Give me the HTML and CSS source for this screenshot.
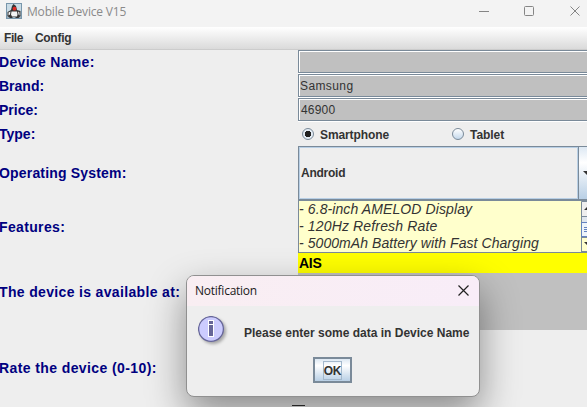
FILE: index.html
```html
<!DOCTYPE html>
<html lang="en">
<head>
<meta charset="utf-8">
<title>Mobile Device V15</title>
<link rel="stylesheet" href="styles.css">
</head>
<body>
<header class="titlebar">
  <svg class="app-icon" width="16" height="16" viewBox="0 0 16 16">
    <rect x=".5" y=".5" width="15" height="15" fill="#c9dbe5" stroke="#7896ab"/>
    <path d="M1 12h14v3H1z" fill="#9eb1bd"/>
    <path d="M7.500 1l2.500 2 1 4 3.500 1v5l-2 2h-2.500l-1-1h-2l-1 1H4l-2.500-2V9L5 7l1-4z" fill="#353535"/>
    <path d="M5.500 8.500h5.500l.5 3-.5 2H6l-1-2zM2.500 9.500l2-1-.5 3-1.500 1zM12 8.500l1.500 1v3l-1-1z" fill="#f4f4f4"/>
    <circle cx="8.500" cy="5.700" r="1.900" fill="#e02a24"/>
  </svg>
  <span class="window-title">Mobile Device V15</span>
  <svg class="window-buttons" width="102" height="22" viewBox="0 0 102 22" fill="none" stroke="#858585">
    <path d="M0 11.500h10"/>
    <rect x="45.500" y="6.500" width="9" height="9" rx="1"/>
    <path d="M91.500 6.500l9 9M100.500 6.500l-9 9"/>
  </svg>
</header>
<nav class="menubar"><span class="m-file">File</span><span class="m-config">Config</span></nav>
<main class="form">
  <label class="l-name">Device Name:</label><div class="field"></div>
  <label class="l-brand">Brand:</label><div class="field brand">Samsung</div>
  <label class="l-price">Price:</label><div class="field price">46900</div>
  <label class="l-type">Type:</label>
  <div class="radios">
    <span class="option"><i class="radio checked"></i><b class="r-smart">Smartphone</b></span>
    <span class="option"><i class="radio"></i><b class="r-tablet">Tablet</b></span>
  </div>
  <label class="l-os">Operating System:</label>
  <div class="combo"><div class="combo-value">Android</div><div class="combo-arrow"><svg width="10" height="5"><path d="M0 0h10L5 5z" fill="#333"/></svg></div></div>
  <label class="l-features">Features:</label>
  <div class="features">
    <div class="lines"><p class="f1">- 6.8-inch AMELOD Display</p><p class="f2">- 120Hz Refresh Rate</p><p class="f3">- 5000mAh Battery with Fast Charging</p></div>
    <div class="scrollbar">
      <svg width="15" height="51">
        <path d="M0 0h15v15H0z" fill="#eee"/><path d="M.5 51V.5H15M0 15.500h15M0 36.500h15M0 50.500h15" fill="none" stroke="#7a8a99"/>
        <path d="M3 9l4-4 4 4zM3 41h8l-4 4z" fill="#333"/>
        <path d="M1 16h14v5H1z" fill="#dfe6ee"/><rect x=".5" y="21.500" width="15" height="14" fill="#edf4fa" stroke="#6382bf"/>
        <path d="M3 26.500h9M3 28.500h9M3 30.500h9" stroke="#6382bf"/>
      </svg>
    </div>
  </div>
  <label class="l-available">The device is available at:</label>
  <div class="list"><div class="selected">AIS</div></div>
  <label class="l-rate">Rate the device (0-10):</label>
  <div class="slider"></div>
</main>
<section class="dialog">
  <header class="dialog-title"><span>Notification</span>
    <svg width="11" height="11" viewBox="0 0 11 11"><path d="M.5 .5l10 10M10.500 .5l-10 10" stroke="#222" stroke-width="1.200"/></svg>
  </header>
  <div class="dialog-message">
    <svg class="info" width="32" height="32" viewBox="0 0 32 32">
      <circle cx="13" cy="13" r="12.400" fill="#ccccff" stroke="#666699" stroke-width="1.300"/>
      <path d="M10 4h6v5h-6zM10 8h6v13h-6z" fill="#fff"/>
      <path d="M11 5h4v3h-4zM11 9h4v11h-4z" fill="#666699"/>
    </svg>
    <b class="message">Please enter some data in Device Name</b>
  </div>
  <button class="ok"><span>OK</span></button>
</section>
</body>
</html>
```
FILE: styles.css
```css
* { box-sizing: border-box; }
body {
  margin: 0;
  width: 587px;
  height: 407px;
  overflow: hidden;
  position: relative;
  background: #eee;
  color: #333;
  font: 12px "Liberation Sans", Arial, sans-serif;
  white-space: nowrap;
}
.titlebar { display: flex; height: 27px; background: #f3f3f3; padding-left: 6px; }
.app-icon { margin-top: 3px; }
.window-title {
  margin-left: 5px;
  font: 12px/23px "Open Sans", "Noto Sans", sans-serif;
  letter-spacing: -.18px;
  color: #8a8a8a;
}
.window-buttons { margin: 0 6px 0 auto; }
.menubar {
  display: flex;
  gap: 12px;
  height: 23px;
  padding-left: 4px;
  font-weight: bold;
  line-height: 22px;
  background: linear-gradient(#fff, #dadada);
  border-bottom: 1px solid #ccc;
}
.m-file { letter-spacing: -.45px; }
.m-config { letter-spacing: -.25px; }
.form {
  display: grid;
  grid-template-columns: 298px 289px;
  grid-template-rows: 24px 24px 24px 24px 54px 53px 77px 76px;
}
label {
  align-self: center;
  margin-left: -1px;
  color: #000080;
  font-size: 14px;
  font-weight: bold;
}
.l-name { letter-spacing: .32px; }
.l-os { letter-spacing: .18px; }
.l-features { letter-spacing: .35px; }
.l-available { letter-spacing: .34px; }
.l-rate { letter-spacing: .4px; }
.field {
  height: 23px;
  padding-left: 1px;
  line-height: 22px;
  border: 1px solid #7a8a99;
  border-right: 0;
  box-shadow: inset 1px 1px #fff, 0 1px #fff;
  background: #c0c0c0;
}
.brand { letter-spacing: .4px; }
.price { padding-left: 2px; letter-spacing: .2px; }
.radios { display: flex; }
.option { display: flex; align-items: center; width: 150px; padding-left: 4px; }
.option:first-child { flex: none; }
.radio {
  flex: none;
  width: 12px;
  height: 12px;
  border: 1px solid #7a8a99;
  border-radius: 50%;
  background: linear-gradient(#fff, #c4d8eb);
}
.checked { background: radial-gradient(circle, #222 0 3px, #e4edf6 3.500px); }
.option b { margin: 1px 0 0 6px; }
.r-smart { letter-spacing: -.1px; }
.r-tablet { letter-spacing: -.05px; }
.combo { display: flex; border: 1px solid #7a8a99; border-right: 0; }
.combo-value {
  width: 279px;
  padding-left: 1px;
  font-weight: bold;
  letter-spacing: -.25px;
  line-height: 50px;
  border: 1px solid #b8cfe5;
}
.combo-arrow {
  flex: 1;
  overflow: hidden;
  display: flex;
  align-items: center;
  padding-left: 4px;
  border-left: 1px solid #7a8a99;
  background: linear-gradient(#dde8f3, #fff 30%, #b8cfe5);
}
.combo-arrow svg { flex: none; }
.features {
  display: flex;
  height: 53px;
  overflow: hidden;
  background: #ffffcc;
  border: 1px solid #7a8a99;
  border-right: 0;
  box-shadow: 0 1px #fff;
}
.lines { width: 282px; font-size: 14px; font-style: italic; line-height: 17px; }
.lines p { margin: 0; }
.f1 { letter-spacing: .1px; }
.f2 { letter-spacing: .15px; }
.f3 { letter-spacing: .07px; }
.scrollbar { width: 6px; overflow: hidden; }
.list { background: #c0c0c0; }
.selected {
  height: 20px;
  padding-left: 1px;
  background: #ff0;
  color: #000;
  font-size: 14px;
  font-weight: bold;
  letter-spacing: -.3px;
  line-height: 20px;
}
.slider { position: relative; }
.slider::after {
  content: "";
  position: absolute;
  left: -6px;
  bottom: 0;
  width: 13px;
  height: 1px;
  background: #333;
}
.dialog {
  position: absolute;
  left: 186px;
  top: 275px;
  width: 294px;
  height: 122px;
  border: 1px solid #909090;
  border-radius: 8px;
  overflow: hidden;
  background: #eee;
  box-shadow: 0 16px 38px rgba(0, 0, 0, .42);
}
.dialog-title {
  display: flex;
  justify-content: space-between;
  align-items: center;
  height: 30px;
  padding: 0 10px 2px 8px;
  background: linear-gradient(90deg, #f9eef2, #f8edf8);
  color: #1a1a1a;
  font: 12px "Open Sans", "Noto Sans", sans-serif;
  letter-spacing: -.25px;
}
.dialog-message { display: flex; padding: 10px 0 0 11px; height: 51px; }
.info { filter: drop-shadow(2px 2px 1.500px rgba(0, 0, 0, .3)); }
.message { margin: 10px 0 0 14px; }
.ok {
  display: flex;
  align-items: center;
  justify-content: center;
  width: 39px;
  height: 26px;
  margin-left: 126px;
  padding: 0;
  border: 2px solid #7a8a99;
  background: linear-gradient(#dde8f3, #fff 30%, #b8cfe5);
  color: #333;
  font: bold 12px "Liberation Sans", Arial, sans-serif;
}
.ok span { padding: 1px 0 0; line-height: 16px; letter-spacing: -.3px; box-shadow: 0 0 0 1px #a3b8cc; }
```
